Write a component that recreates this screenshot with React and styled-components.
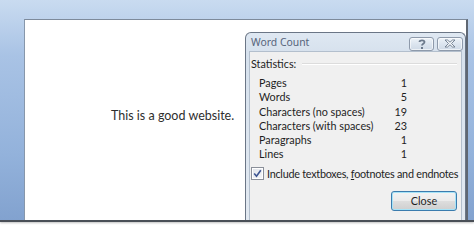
import styled, { createGlobalStyle } from 'styled-components';

const Global = createGlobalStyle`
  html, body {
    margin: 0;
    padding: 0;
    background: #ffffff;
  }
  body {
    width: 474px;
    height: 228px;
    overflow: hidden;
  }
`

const Window = styled.div`
  height: 201px;
  padding: 19px 6px 0 24px;
  background: linear-gradient(180deg, #c9dbf0 0%, #a9c3e5 25%, #93b2db 70%, #82a2cf 100%);
  box-shadow: 0 2px 0 #4a4f57, 0 3px 2px rgba(0, 0, 0, 0.25);
`

const Page = styled.div`
  height: 200px;
  display: flex;
  background: #ffffff;
  border-top: 1px solid #7d8a9b;
  border-left: 1px solid #8797ab;
  border-right: 2px solid #5f6772;
`

const TextArea = styled.div`
  flex: 1;
  padding: 88px 0 0 86px;
  font-family: Lato, "Noto Sans", sans-serif;
  font-size: 12.5px;
  color: #2e2e2e;
`

const Dialog = styled.div`
  width: 213px;
  margin-top: 12px;
  display: flex;
  flex-direction: column;
  border: 1px solid #6b7686;
  border-bottom: none;
  border-radius: 6px 6px 0 0;
  background: linear-gradient(180deg, #dfe8f2 0%, #d6e1ed 20px, #e2e9f1 100%);
  padding: 0 3px;
  font-family: Lato, "Noto Sans", sans-serif;
  font-size: 10.8px;
  color: #1e1e1e;
`

const TitleBar = styled.div`
  height: 18px;
  display: flex;
  align-items: center;
  padding-left: 2px;
`

const Title = styled.span`
  flex: 1;
  font-family: "Noto Sans", sans-serif;
  font-size: 10.4px;
  color: #56637a;
`

const CaptionButtons = styled.div`
  display: flex;
  gap: 3px;
  margin-top: 3px;
  margin-right: -1px;
`

const CaptionButton = styled.div`
  width: ${p => p.$w}px;
  height: 12px;
  display: flex;
  align-items: center;
  justify-content: center;
  border: 1px solid #8e9aab;
  border-radius: 3px;
  background: linear-gradient(180deg, #eef3f8 0%, #dce5ef 50%, #cfdae7 100%);
  box-shadow: inset 0 0 0 1px rgba(255, 255, 255, 0.6);
`

const Client = styled.div`
  flex: 1;
  background: #f0f0f0;
  border: 1px solid #b3bfcd;
  border-bottom: none;
  padding: 0;
`

const SectionHead = styled.div`
  display: flex;
  align-items: center;
  margin-top: 5px;
  padding-left: 1px;
  line-height: 14px;
`

const Rule = styled.div`
  flex: 1;
  height: 0;
  margin: 0 4px 0 6px;
  border-top: 1px solid #dcdcdc;
  border-bottom: 1px solid #ffffff;
`

const Stats = styled.div`
  margin-top: 5px;
  padding-left: 9px;
`

const Row = styled.div`
  display: flex;
  height: 14.3px;
  line-height: 14.3px;
`

const Label = styled.span`
  width: 128px;
  white-space: nowrap;
`

const Value = styled.span`
  width: 20px;
  text-align: right;
`

const CheckRow = styled.label`
  display: flex;
  align-items: center;
  gap: 3px;
  margin-top: 5px;
  padding-left: 1px;
  white-space: nowrap;
  line-height: 14px;
  letter-spacing: -0.25px;
`

const Box = styled.span`
  width: 11px;
  height: 11px;
  display: flex;
  align-items: center;
  justify-content: center;
  border: 1px solid #8a8f99;
  background: linear-gradient(135deg, #dfe3ea 0%, #f7f8fa 100%);
  box-shadow: inset 0 0 0 1px #ffffff;
`

const Underline = styled.span`
  text-decoration: underline;
`

const Footer = styled.div`
  display: flex;
  justify-content: flex-end;
  margin-top: 10px;
  padding-right: 4px;
`

const Button = styled.button`
  width: 66px;
  height: 20px;
  padding: 0;
  border: 1px solid #3b7cae;
  border-radius: 3px;
  background: linear-gradient(180deg, #f3f3f3 0%, #ebebeb 48%, #dddddd 52%, #cfcfcf 100%);
  box-shadow: inset 0 0 0 1px #a6e3f7;
  font-family: Lato, "Noto Sans", sans-serif;
  font-size: 10.8px;
  color: #1e1e1e;
  cursor: pointer;
`

const stats = [
  ['Pages', 1],
  ['Words', 5],
  ['Characters (no spaces)', 19],
  ['Characters (with spaces)', 23],
  ['Paragraphs', 1],
  ['Lines', 1],
]

function App() {
  return (
    <>
      <Global />
      <Window>
        <Page>
          <TextArea>This is a good website.</TextArea>
          <Dialog>
            <TitleBar>
              <Title>Word Count</Title>
              <CaptionButtons>
                <CaptionButton $w={23}>
                  <svg width="8" height="10" viewBox="0 0 8 10">
                    <path d="M1.5 3 C1.5 0.8 6.5 0.8 6.5 3 C6.5 4.6 4 4.8 4 6.5" fill="none" stroke="#6c7a8c" strokeWidth="1.8" />
                    <rect x="3" y="8" width="2" height="2" fill="#6c7a8c" />
                  </svg>
                </CaptionButton>
                <CaptionButton $w={24}>
                  <svg width="12" height="9" viewBox="0 0 12 9">
                    <path d="M1 1 L3.5 1 L6 3.2 L8.5 1 L11 1 L7.5 4.5 L11 8 L8.5 8 L6 5.8 L3.5 8 L1 8 L4.5 4.5 Z" fill="#f4f7fa" stroke="#6c7a8c" strokeWidth="0.9" strokeLinejoin="round" />
                  </svg>
                </CaptionButton>
              </CaptionButtons>
            </TitleBar>
            <Client>
              <SectionHead>
                Statistics:
                <Rule />
              </SectionHead>
              <Stats>
                {stats.map(([label, value]) => (
                  <Row key={label}>
                    <Label>{label}</Label>
                    <Value>{value}</Value>
                  </Row>
                ))}
              </Stats>
              <CheckRow>
                <Box>
                  <svg width="9" height="9" viewBox="0 0 9 9">
                    <path d="M1.2 4.6 L3.5 7.3 L7.8 1.2" fill="none" stroke="#3d5592" strokeWidth="1.6" />
                  </svg>
                </Box>
                <span>Include textboxes, <Underline>f</Underline>ootnotes and endnotes</span>
              </CheckRow>
              <Footer>
                <Button>Close</Button>
              </Footer>
            </Client>
          </Dialog>
        </Page>
      </Window>
    </>
  )
}

export default App
